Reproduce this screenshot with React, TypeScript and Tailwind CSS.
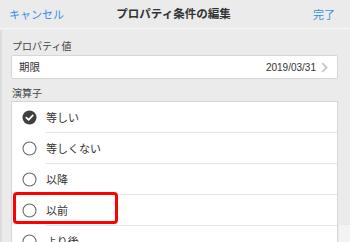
import React from 'react';

const options = ['等しい', '等しくない', '以降', '以前', 'より後'];

function Radio({ checked }: { checked: boolean }) {
  if (checked) {
    return (
      <svg width="15" height="15" viewBox="0 0 15 15">
        <circle cx="7.5" cy="7.5" r="7" fill="#3f3f3f" />
        <path d="M4.3 7.7 L6.6 9.9 L10.8 5.4" fill="none" stroke="#fff" strokeWidth="1.7" strokeLinecap="round" strokeLinejoin="round" />
      </svg>
    );
  }
  return (
    <svg width="15" height="15" viewBox="0 0 15 15">
      <circle cx="7.5" cy="7.5" r="6.5" fill="none" stroke="#6b6b6b" strokeWidth="1.1" />
    </svg>
  );
}

function App() {
  return (
    <div
      className="w-[350px] h-[242px] overflow-hidden bg-[#ebebeb] text-[#333] relative"
      style={{ fontFamily: '"Noto Sans CJK JP", "Noto Sans", sans-serif' }}
    >
      <div className="h-[29px] grid grid-cols-[1fr_auto_1fr] items-center pl-[9px] pr-[15px] border-b border-[#f7f7f7]">
        <span className="text-[11px] text-[#3b8ee3]">キャンセル</span>
        <span className="text-[11.5px] font-bold text-[#333] ml-[3px]">プロパティ条件の編集</span>
        <span className="text-[11px] text-[#3b8ee3] justify-self-end">完了</span>
      </div>

      <div className="px-[11px] pr-[12px]">
        <div className="text-[10px] text-[#444] pt-[10px] pb-[2px] pl-[1px] leading-[14px]">プロパティ値</div>
        <div className="h-[24px] bg-white border border-[#d6d6d6] rounded-[2px] flex items-center pl-[7px] pr-[9px] text-[10.5px]">
          <span className="text-[#333]">期限</span>
          <span className="ml-auto text-[#333] text-[10px]" style={{ fontFamily: '"Liberation Sans", Arial, sans-serif' }}>2019/03/31</span>
          <svg width="7" height="11" viewBox="0 0 7 11" className="ml-[5px]">
            <path d="M1.2 1 L5.5 5.5 L1.2 10" fill="none" stroke="#c4c4c4" strokeWidth="1.8" />
          </svg>
        </div>

        <div className="text-[10px] text-[#444] pt-[7px] pb-[2px] pl-[1px] leading-[13px]">演算子</div>
        <div className="bg-white border border-[#d6d6d6] border-b-0">
          {options.map((o, i) => (
            <div key={o} className="relative flex items-center h-[31px]">
              <div className="w-[34px] flex justify-center pl-[1px]">
                <Radio checked={i === 0} />
              </div>
              <div className="flex-1 h-full flex items-center border-b border-[#e6e6e6] text-[11px] text-[#333]">
                {o}
              </div>
              {i === 3 && (
                <div className="absolute left-[1px] top-[-3px] w-[105px] h-[32px] border-[3px] border-[#f00] rounded-[4px]" />
              )}
            </div>
          ))}
        </div>
      </div>

      <div className="absolute left-0 top-[30px] bottom-0 w-[2px] bg-[#dcdcdc]" />
      <div className="absolute right-0 top-[225px] bottom-0 w-[11px] bg-[#f3f3f3]" />
    </div>
  );
}

export default App;
